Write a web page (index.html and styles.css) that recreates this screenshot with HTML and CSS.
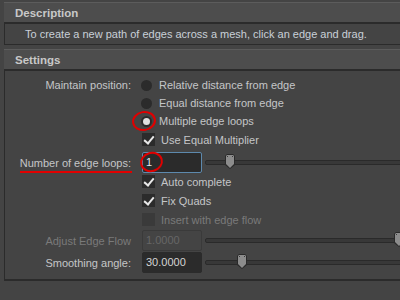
FILE: index.html
```html
<!DOCTYPE html>
<html lang="en">
<head>
    <meta charset="UTF-8">
    <title>Insert Edge Loop Tool Settings</title>
    <link rel="stylesheet" href="styles.css">
</head>
<body>
    <div class="tool-panel">
        <div class="frame">
            <div class="frame-header">Description</div>
            <div class="frame-body desc">
                To create a new path of edges across a mesh, click an edge and drag.
            </div>
        </div>
        <div class="frame">
            <div class="frame-header">Settings</div>
            <div class="frame-body settings">
                <div class="row r-radio">
                    <div class="label">Maintain position:</div>
                    <div class="ctrl"><span class="radio"></span>Relative distance from edge</div>
                </div>
                <div class="row r-radio">
                    <div class="label"></div>
                    <div class="ctrl"><span class="radio"></span>Equal distance from edge</div>
                </div>
                <div class="row r-radio">
                    <div class="label"></div>
                    <div class="ctrl"><span class="radio on"><span class="mark mark-radio"></span></span>Multiple edge loops</div>
                </div>
                <div class="row r-check">
                    <div class="label"></div>
                    <div class="ctrl"><span class="check on"></span>Use Equal Multiplier</div>
                </div>
                <div class="row r-field first">
                    <div class="label"><span class="underlined">Number of edge loops:</span></div>
                    <div class="ctrl">
                        <div class="field focus">1<span class="mark mark-field"></span></div>
                        <div class="slider"><span class="handle" style="left: 19px"></span></div>
                    </div>
                </div>
                <div class="row r-check">
                    <div class="label"></div>
                    <div class="ctrl"><span class="check on"></span>Auto complete</div>
                </div>
                <div class="row r-check">
                    <div class="label"></div>
                    <div class="ctrl"><span class="check on"></span>Fix Quads</div>
                </div>
                <div class="row r-check disabled">
                    <div class="label"></div>
                    <div class="ctrl"><span class="check"></span>Insert with edge flow</div>
                </div>
                <div class="row r-field disabled">
                    <div class="label">Adjust Edge Flow</div>
                    <div class="ctrl">
                        <div class="field">1.0000</div>
                        <div class="slider"><span class="handle" style="left: 188px"></span></div>
                    </div>
                </div>
                <div class="row r-field last">
                    <div class="label">Smoothing angle:</div>
                    <div class="ctrl">
                        <div class="field">30.0000</div>
                        <div class="slider"><span class="handle" style="left: 31px"></span></div>
                    </div>
                </div>
            </div>
        </div>
    </div>
</body>
</html>
```

FILE: styles.css
```css
body {
    margin: 0;
    padding: 0;
    width: 400px;
    height: 300px;
    overflow: hidden;
    background-color: #444444;
    font-family: "Liberation Sans", Arial, sans-serif;
    font-size: 11px;
    color: #c4c6c8;
}
.tool-panel {
    width: 430px;
    padding: 2px 0 0 4px;
}
.frame {
    margin-bottom: 4px;
}
.frame-header {
    height: 19px;
    line-height: 20px;
    padding-left: 11px;
    background-color: #4d4d4d;
    border-top: 1px solid #5c5c5c;
    font-weight: bold;
    font-size: 11.5px;
    color: #c8c8c8;
}
.frame-body {
    background-color: #444444;
    border-top: 2px solid #2b2b2b;
    border-left: 1px solid #2b2b2b;
}
.desc {
    height: 20px;
    line-height: 20px;
    padding-left: 20px;
    color: #c9d0d8;
    border-bottom: 1px solid #2b2b2b;
}
.settings {
    padding-top: 5px;
    padding-bottom: 5px;
    border-bottom: 2px solid #2b2b2b;
}
.row {
    display: flex;
    align-items: center;
    height: 18px;
}
.row.r-check {
    height: 19px;
}
.row.r-field {
    height: 21px;
    margin: 1px 0;
}
.row.first {
    margin: 3px 0 -1px;
}
.row.last {
    margin-top: 1px;
}
.label {
    width: 126px;
    flex: none;
    text-align: right;
    padding-right: 10px;
}
.ctrl {
    display: flex;
    align-items: center;
    flex: 1;
}
.radio {
    position: relative;
    width: 11px;
    height: 11px;
    border-radius: 50%;
    background-color: #2b2b2b;
    margin: 0 7px 0 0;
    flex: none;
}
.radio.on::after {
    content: "";
    position: absolute;
    left: 2px;
    top: 2px;
    width: 7px;
    height: 7px;
    border-radius: 50%;
    background-color: #e0e0e0;
}
.check {
    position: relative;
    width: 13px;
    height: 13px;
    background-color: #2b2b2b;
    margin: 0 6px 0 1px;
    flex: none;
}
.check.on::after {
    content: "";
    position: absolute;
    left: 4px;
    top: 1px;
    width: 4px;
    height: 8px;
    border-right: 2px solid #e8e8e8;
    border-bottom: 2px solid #e8e8e8;
    transform: rotate(40deg);
}
.disabled {
    color: #7a7a7a;
}
.disabled .check {
    background-color: #3a3a3a;
}
.field {
    position: relative;
    width: 55px;
    height: 19px;
    line-height: 19px;
    padding-left: 3px;
    margin-left: 1px;
    background-color: #2b2b2b;
    border: 1px solid #2b2b2b;
    border-radius: 2px;
    color: #d4d4d4;
    flex: none;
}
.field.focus {
    border-color: #5d89ad;
    color: #e0e8f0;
}
.disabled .field {
    background-color: #444444;
    border-color: #3a3a3a;
    color: #666666;
}
.slider {
    position: relative;
    flex: 1;
    height: 3px;
    margin-left: 3px;
    background-color: #383838;
    border: 1px solid #2a2a2a;
    border-radius: 2px;
}
.handle {
    position: absolute;
    top: -7px;
    width: 10px;
    height: 15px;
    background: #2a2a2a;
    clip-path: polygon(0 2px, 2px 0, 8px 0, 10px 2px, 10px 11px, 5px 15px, 0 11px);
}
.handle::before {
    content: "";
    position: absolute;
    inset: 1px;
    background: #8c8c8c;
    clip-path: polygon(0 1px, 1px 0, 7px 0, 8px 1px, 8px 9px, 4px 13px, 0 9px);
}
.handle::after {
    content: "";
    position: absolute;
    left: 2px;
    top: 2px;
    width: 1px;
    height: 1px;
    background: #3a3a3a;
    box-shadow: 5px 0 0 #3a3a3a;
}
.underlined {
    position: relative;
}
.underlined::after {
    content: "";
    position: absolute;
    left: 0;
    right: -1px;
    bottom: -4px;
    height: 2px;
    background-color: #e00000;
}
.mark {
    position: absolute;
    border: 2px solid #e00000;
    border-radius: 50%;
}
.mark-radio {
    left: -9px;
    top: -5px;
    width: 20px;
    height: 16px;
    transform: rotate(-10deg);
}
.mark-field {
    left: -3px;
    top: -1px;
    width: 19px;
    height: 16px;
    transform: rotate(-15deg);
}
```
